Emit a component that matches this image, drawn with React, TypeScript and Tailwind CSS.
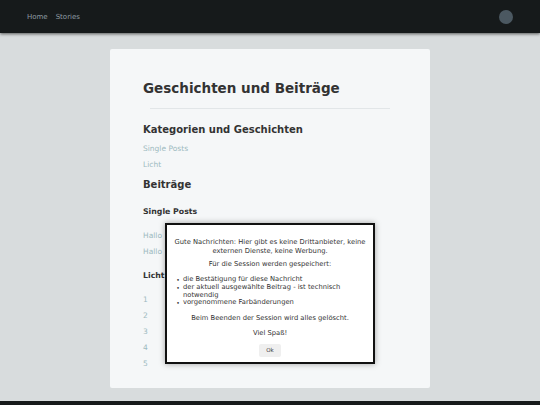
const font = "font-['DejaVu_Sans',Verdana,sans-serif]";

function NavBar() {
  return (
    <nav className="relative z-10 flex h-[33px] items-center justify-between bg-[#161a1b] px-[27px] shadow-[0_1px_3px_rgba(0,0,0,0.6)]">
      <div className="mt-[2px] flex gap-[8px] text-[7px] text-[#8e9aa3]">
        <a>Home</a>
        <a>Stories</a>
      </div>
      <div className="h-[14px] w-[14px] rounded-full bg-[#4b5861]" />
    </nav>
  );
}

function NumLink({ n }: { n: string }) {
  return <a className="block text-[7.5px] leading-[16px] text-[#9dbac0]">{n}</a>;
}

function Bullet({ children }: { children: string }) {
  return (
    <li className="flex">
      <span className="flex w-[10px] shrink-0 justify-center text-[6px]">•</span>
      <span>{children}</span>
    </li>
  );
}

function ConsentDialog() {
  return (
    <div className="absolute left-[165px] top-[223px] w-[210px] border-2 border-[#111] bg-white px-[6px] pb-[5px] pt-[13px] text-[6.75px] text-[#333] shadow-[0_0_6px_rgba(0,0,0,0.35)]">
      <p className="text-center leading-[9px]">
        Gute Nachrichten: Hier gibt es keine Drittanbieter, keine externen Dienste, keine Werbung.
      </p>
      <p className="mt-[4px] text-center leading-[9px]">Für die Session werden gespeichert:</p>
      <ul className="mt-[7px] leading-[7.75px]">
        <Bullet>die Bestätigung für diese Nachricht</Bullet>
        <Bullet>der aktuell ausgewählte Beitrag - ist technisch notwendig</Bullet>
        <Bullet>vorgenommene Farbänderungen</Bullet>
      </ul>
      <p className="mt-[7px] text-center leading-[9px]">Beim Beenden der Session wird alles gelöscht.</p>
      <p className="mt-[6px] text-center leading-[9px]">Viel Spaß!</p>
      <div className="mt-[6px] flex justify-center">
        <button className="h-[13px] w-[22px] rounded-[2px] bg-[#efefef] text-[5.5px] text-[#333]">Ok</button>
      </div>
    </div>
  );
}

export default function App() {
  return (
    <div className={`${font} relative flex min-h-[420px] flex-col bg-[#d8dcdd] text-[#333]`}>
      <NavBar />
      <main className="pb-[13px] pt-[16px]">
        <div className="mx-auto w-[320px] rounded-[2px] bg-[#f5f7f8] px-[33px] pb-[16px] pt-[31px]">
          <h1 className="text-[13.5px] font-bold leading-[16px] text-[#333]">Geschichten und Beiträge</h1>
          <hr className="mx-[7px] mt-[12px] border-t border-[#e2e6e8]" />
          <h2 className="mt-[15px] text-[10px] font-bold leading-[12px]">Kategorien und Geschichten</h2>
          <div className="mt-[5px]">
            <NumLink n="Single Posts" />
            <NumLink n="Licht" />
          </div>
          <h2 className="mt-[6px] text-[10px] font-bold leading-[12px]">Beiträge</h2>
          <h3 className="mt-[16px] text-[7.8px] font-bold leading-[10px]">Single Posts</h3>
          <div className="mt-[11px]">
            <NumLink n="Hallo" />
            <NumLink n="Hallo" />
          </div>
          <h3 className="mt-[11px] text-[7.8px] font-bold leading-[10px]">Licht</h3>
          <div className="mt-[11px]">
            {["1", "2", "3", "4", "5"].map((n) => (
              <NumLink key={n} n={n} />
            ))}
          </div>
        </div>
      </main>
      <footer className="h-[20px] bg-[#161a1b]" />
      <ConsentDialog />
    </div>
  );
}
